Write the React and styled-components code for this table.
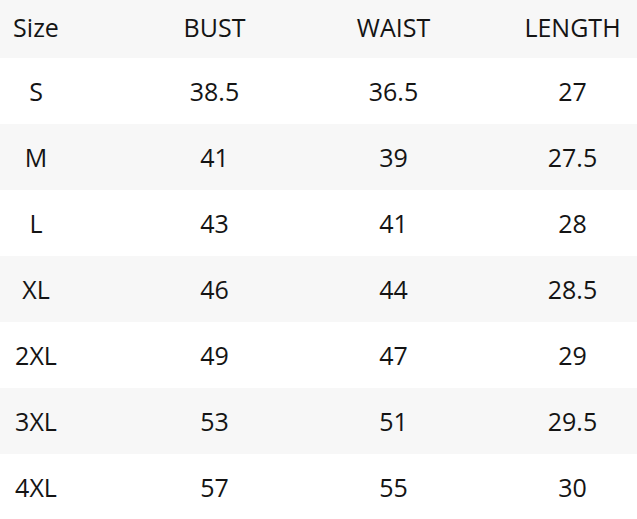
import React from "react";
import styled, { createGlobalStyle } from "styled-components";

const Global = createGlobalStyle`
  html, body { margin: 0; padding: 0; background: #ffffff; }
  body { width: 637px; height: 519px; overflow: hidden; }
`;

const Table = styled.div`
  width: 637px;
  height: 519px;
  overflow: hidden;
  font-family: "Open Sans", "Noto Sans", sans-serif;
  font-size: 25px;
  color: #141414;
`;

const Row = styled.div`
  display: grid;
  grid-template-columns: 125px repeat(3, 179px);
  align-items: center;
  height: ${(p) => (p.$header ? "58px" : "66px")};
  background: ${(p) => (p.$shade ? "#f7f7f7" : "#ffffff")};
  padding-bottom: ${(p) => (p.$header ? "5px" : "1px")};
  box-sizing: border-box;
`;

const Cell = styled.div`
  text-align: center;
  padding-right: ${(p) => (p.$first ? "53px" : "0")};
  white-space: nowrap;
`;

const header = ["Size", "BUST", "WAIST", "LENGTH"];
const rows = [
  ["S", "38.5", "36.5", "27"],
  ["M", "41", "39", "27.5"],
  ["L", "43", "41", "28"],
  ["XL", "46", "44", "28.5"],
  ["2XL", "49", "47", "29"],
  ["3XL", "53", "51", "29.5"],
  ["4XL", "57", "55", "30"],
];

export default function App() {
  return (
    <>
      <Global />
      <Table>
        <Row $header $shade>
          {header.map((h, i) => (
            <Cell key={h} $first={i === 0}>{h}</Cell>
          ))}
        </Row>
        {rows.map((r, ri) => (
          <Row key={r[0]} $shade={ri % 2 === 1}>
            {r.map((c, i) => (
              <Cell key={i} $first={i === 0}>{c}</Cell>
            ))}
          </Row>
        ))}
      </Table>
    </>
  );
}
